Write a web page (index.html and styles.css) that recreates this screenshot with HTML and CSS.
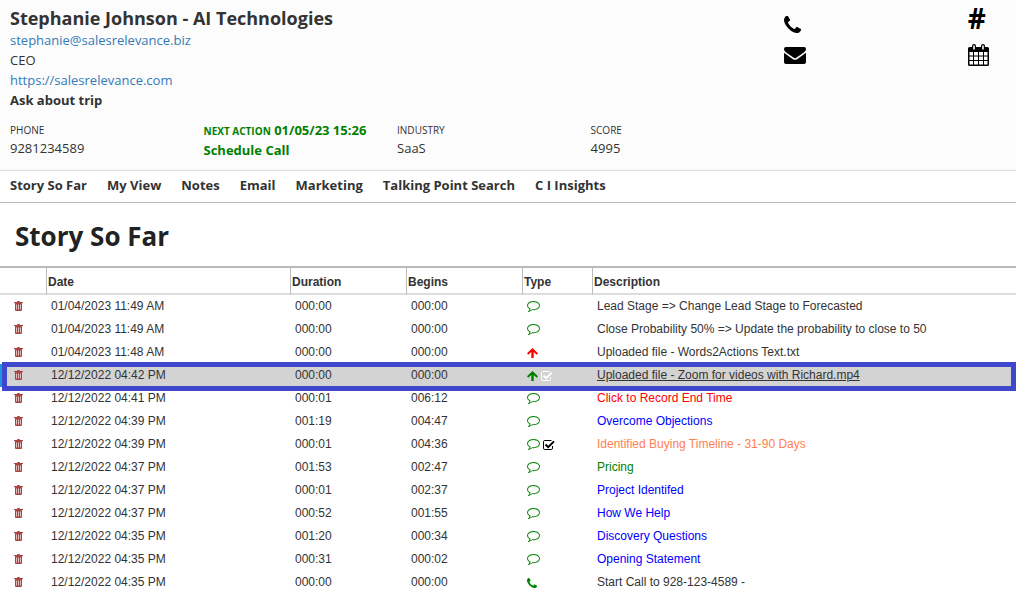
FILE: index.html
```html
<!DOCTYPE html>
<html lang="en">
<head>
    <meta charset="UTF-8">
    <meta name="viewport" content="width=device-width, initial-scale=1.0">
    <title>Stephanie Johnson - AI Technologies</title>
    <link rel="stylesheet" href="styles.css">
</head>
<body>

    <!-- Icon definitions -->
    <svg class="icon-defs" aria-hidden="true">
        <symbol id="icon-phone" viewBox="0 128 1408 1408">
            <path d="M1408 1240q0 27-10 70.5t-21 68.5q-21 50-122 106-94 51-186 51-27 0-52.5-3.5t-57.5-12.5-47.5-14.5-55.5-20.5-49-18q-98-35-175-83-128-79-264.5-215.5t-215.5-264.5q-48-77-83-175-3-9-18-49t-20.5-55.5-14.5-47.5-12.5-57.5-3.5-52.5q0-92 51-186 56-101 106-122 25-11 68.5-21t70.5-10q14 0 21 3 18 6 53 76 11 19 30 54t35 63.5 31 53.5q3 4 17.5 25t21.5 35.5 7 28.5q0 20-28.5 50t-62 55-62 53-28.5 46q0 9 5 22.5t8.5 20.5 14 24 11.5 19q76 137 174 235t235 174q2 1 19 11.5t24 14 20.5 8.5 22.5 5q18 0 46-28.5t53-62 55-62 50-28.5q14 0 28.5 7t35.5 21.5 25 17.5q25 15 53.5 31t63.5 35 54 30q70 35 76 53 3 7 3 21z"/>
        </symbol>
        <symbol id="icon-envelope" viewBox="0 0 22 17">
            <path d="M2 0h18a2 2 0 0 1 2 2c0 1.500-1 2.600-2.200 3.500L13 10.300c-.8.600-1.300.9-2 .9s-1.200-.3-2-.9L2.200 5.500C1 4.600 0 3.500 0 2a2 2 0 0 1 2-2z"/>
            <path d="M0 5.700c.4.400.8.800 1.300 1.100l6.600 4.600c1 .8 2 1.400 3.100 1.400s2.100-.6 3.100-1.400l6.600-4.600c.5-.3.900-.7 1.300-1.100V15a2 2 0 0 1-2 2H2a2 2 0 0 1-2-2z"/>
        </symbol>
        <symbol id="icon-calendar" viewBox="0 0 21 22">
            <path fill-rule="evenodd" d="M1.500 3H4V2a2 2 0 0 1 4 0v1h5V2a2 2 0 0 1 4 0v1h2.500A1.500 1.500 0 0 1 21 4.500v16a1.500 1.500 0 0 1-1.500 1.500h-18A1.500 1.500 0 0 1 0 20.500v-16A1.500 1.500 0 0 1 1.500 3zM5.200 1.500v4h1.600v-4zM14.200 1.500v4h1.600v-4zM1.500 8v3.500H5V8zM6 8v3.500h4V8zM11 8v3.500h4V8zM16 8v3.500h3.500V8zM1.500 12.500V16H5v-3.500zM6 12.500V16h4v-3.500zM11 12.500V16h4v-3.500zM16 12.500V16h3.500v-3.500zM1.500 17v3.500H5V17zM6 17v3.500h4V17zM11 17v3.500h4V17zM16 17v3.500h3.500V17z"/>
        </symbol>
        <symbol id="icon-trash" viewBox="0 0 9 10">
            <path fill-rule="evenodd" d="M3 1L3.500 0h2L6 1h3v1H8v7a1 1 0 0 1-1 1H2a1 1 0 0 1-1-1V2H0V1z"/>
            <path class="slots" d="M2.500 3.500v5M4.500 3.500v5M6.500 3.500v5"/>
        </symbol>
        <symbol id="icon-comment" viewBox="0 256 1792 1536">
            <path d="M896 384q-204 0-381.500 69.500t-282 187.500-104.500 255q0 112 71.500 213.500t201.500 175.500l87 50-27 96q-24 91-70 172 152-63 275-171l43-38 57 6q69 8 130 8 204 0 381.500-69.500t282-187.500 104.500-255-104.500-255-282-187.500-381.500-69.500zM1792 896q0 174-120 321.500t-326 233-450 85.500q-70 0-145-8-198 175-460 242-49 14-114 22h-5q-15 0-27-10.500t-16-27.500v-1q-3-4-.5-12t2-10 4.500-9.500l6-9 7-8.500 8-9q7-8 31-34.500t34.500-38 31-39.500 32.500-51 27-59 26-76q-157-89-247.500-220t-90.500-281q0-174 120-321.500t326-233 450-85.500 450 85.500 326 233 120 321.500z"/>
        </symbol>
        <symbol id="icon-arrow" viewBox="0 0 11 10">
            <path d="M5.500 0L11 5.300 9.700 6.700 6.700 3.900V10H4.300V3.900l-3 2.800L0 5.300z"/>
        </symbol>
        <symbol id="icon-check" viewBox="0 0 12 10">
            <path d="M9.500 6v2.200a1.300 1.300 0 0 1-1.300 1.300H1.800A1.300 1.300 0 0 1 .5 8.200V1.800A1.300 1.300 0 0 1 1.800.5H8.500" fill="none" stroke="currentColor"/>
            <path d="M2.500 4.500L5.200 7.200 11 1.400" fill="none" stroke="currentColor" stroke-width="2"/>
        </symbol>
    </svg>

    <header class="profile">
        <div class="contact">
            <h2>Stephanie Johnson - AI Technologies</h2>
            <div><a href="mailto:stephanie@salesrelevance.biz">stephanie@salesrelevance.biz</a></div>
            <div>CEO</div>
            <div><a href="https://salesrelevance.com">https://salesrelevance.com</a></div>
            <div class="note">Ask about trip</div>
        </div>
        <div class="actions">
            <a href="tel:9281234589" aria-label="Call"><svg class="icon-call"><use href="#icon-phone"/></svg></a>
            <a href="mailto:stephanie@salesrelevance.biz" aria-label="Send email"><svg class="icon-mail"><use href="#icon-envelope"/></svg></a>
        </div>
        <div class="actions tools">
            <a href="#" class="hash">#</a>
            <a href="#" aria-label="Calendar"><svg class="icon-date"><use href="#icon-calendar"/></svg></a>
        </div>
        <div class="field">
            <div class="field-label">PHONE</div>
            <div>9281234589</div>
        </div>
        <div class="next-action">
            <div><span class="field-label">NEXT ACTION</span> 01/05/23 15:26</div>
            <div>Schedule Call</div>
        </div>
        <div class="field">
            <div class="field-label">INDUSTRY</div>
            <div>SaaS</div>
        </div>
        <div class="field">
            <div class="field-label">SCORE</div>
            <div>4995</div>
        </div>
    </header>

    <nav class="tabs">
        <a href="#">Story So Far</a>
        <a href="#">My View</a>
        <a href="#">Notes</a>
        <a href="#">Email</a>
        <a href="#">Marketing</a>
        <a href="#">Talking Point Search</a>
        <a href="#">C I Insights</a>
    </nav>

    <h1>Story So Far</h1>

    <table id="storyTable">
        <thead>
            <tr>
                <th class="col-delete"></th>
                <th class="col-date">Date</th>
                <th class="col-time">Duration</th>
                <th class="col-time">Begins</th>
                <th class="col-type">Type</th>
                <th>Description</th>
            </tr>
        </thead>
        <tbody>
            <!-- Story rows are added by renderTable -->
        </tbody>
    </table>

    <script src="script.js"></script>
</body>
</html>
```
FILE: styles.css
```css
* {
    box-sizing: border-box;
}
body {
    margin: 0;
    background-color: white;
    color: #333;
    font-family: "Open Sans", sans-serif;
    font-size: 13px;
    line-height: 20px;
    overflow-x: hidden;
}
svg {
    display: block;
    fill: currentColor;
}
.icon-defs {
    display: none;
}
a {
    color: #337ab7;
    text-decoration: none;
}
.profile {
    display: grid;
    grid-template-columns: repeat(4, 116fr) 110fr 23fr;
    row-gap: 10px;
    padding: 6px 10px 10px;
    background-color: #fcfcfc;
    border-bottom: 1px solid #ddd;
}
.contact {
    grid-column: span 4;
}
h2 {
    margin: 0;
    font-size: 18px;
    line-height: 24px;
}
.note {
    font-weight: bold;
}
.actions {
    display: flex;
    flex-direction: column;
    gap: 14px;
    padding-top: 10px;
}
.actions a {
    color: black;
}
.tools {
    gap: 16px;
    padding-top: 2px;
}
.hash {
    font-size: 28px;
    font-weight: bold;
}
.icon-call {
    width: 17px;
    height: 17px;
}
.icon-mail {
    width: 22px;
    height: 17px;
}
.icon-date {
    width: 21px;
    height: 22px;
}
.field {
    padding-top: 1px;
    line-height: 18px;
}
.field-label {
    font-size: 10px;
}
.next-action {
    color: green;
    font-weight: bold;
}
.next-action .field-label {
    line-height: 10px;
}
.tabs {
    display: flex;
    gap: 20px;
    padding: 4px 10px 7px;
    border-bottom: 1px solid #bbb;
}
.tabs a {
    color: #333;
    font-weight: bold;
}
h1 {
    margin: 0;
    padding: 20px 15px 16px;
    color: #222;
    font-size: 26px;
    line-height: 27px;
}
table {
    width: 100%;
    table-layout: fixed;
    border-collapse: separate;
    border-spacing: 0;
    font-family: "Liberation Sans", Arial, sans-serif;
    font-size: 12px;
    line-height: 15px;
}
th {
    height: 29px;
    padding: 3px 1px 0;
    border-top: 2px solid #bbb;
    border-bottom: 2px solid #ddd;
    border-left: 1px solid #bbb;
    text-align: left;
}
th:first-child {
    border-left: none;
}
td {
    height: 23px;
    padding: 0 5px;
    white-space: nowrap;
}
.col-delete {
    width: 46px;
}
.col-date {
    width: 244px;
}
.col-time {
    width: 116px;
}
.col-type {
    width: 70px;
}
.delete {
    display: block;
    margin-left: 9px;
    padding: 0 0 2px;
    border: none;
    background: none;
    color: #a94442;
    cursor: pointer;
}
.delete svg {
    width: 9px;
    height: 10px;
}
.slots {
    stroke: #e3bcbb;
}
.type {
    display: flex;
    align-items: center;
    gap: 3px;
    color: green;
}
.icon-comment {
    width: 13px;
    height: 11px;
}
.icon-arrow {
    width: 11px;
    height: 10px;
}
.icon-phone {
    width: 10px;
    height: 10px;
}
.icon-check {
    width: 12px;
    height: 10px;
    color: black;
}
.red {
    color: red;
}
.blue {
    color: blue;
}
.green {
    color: green;
}
.coral {
    color: coral;
}
.selected {
    position: relative;
    background-color: lightgray;
}
.selected td:first-child {
    box-shadow: inset 2px 0 #2196dc;
}
.selected td:last-child {
    text-decoration: underline;
}
.selected .icon-check {
    color: white;
}
/* frame drawn over the whole selected row */
.selected td:last-child::after {
    content: "";
    position: absolute;
    top: -2px;
    right: 0;
    bottom: -4px;
    left: 2px;
    border: 5px solid #3f48cc;
    pointer-events: none;
}
```
FILE: script.js
```js
const stories = [
    { date: '01/04/2023 11:49 AM', duration: '000:00', begins: '000:00', type: 'comment', text: 'Lead Stage => Change Lead Stage to Forecasted' },
    { date: '01/04/2023 11:49 AM', duration: '000:00', begins: '000:00', type: 'comment', text: 'Close Probability 50% => Update the probability to close to 50' },
    { date: '01/04/2023 11:48 AM', duration: '000:00', begins: '000:00', type: 'arrow', typeColor: 'red', text: 'Uploaded file - Words2Actions Text.txt' },
    { date: '12/12/2022 04:42 PM', duration: '000:00', begins: '000:00', type: 'arrow', checked: true, selected: true, text: 'Uploaded file - Zoom for videos with Richard.mp4' },
    { date: '12/12/2022 04:41 PM', duration: '000:01', begins: '006:12', type: 'comment', color: 'red', text: 'Click to Record End Time' },
    { date: '12/12/2022 04:39 PM', duration: '001:19', begins: '004:47', type: 'comment', color: 'blue', text: 'Overcome Objections' },
    { date: '12/12/2022 04:39 PM', duration: '000:01', begins: '004:36', type: 'comment', checked: true, color: 'coral', text: 'Identified Buying Timeline - 31-90 Days' },
    { date: '12/12/2022 04:37 PM', duration: '001:53', begins: '002:47', type: 'comment', color: 'green', text: 'Pricing' },
    { date: '12/12/2022 04:37 PM', duration: '000:01', begins: '002:37', type: 'comment', color: 'blue', text: 'Project Identifed' },
    { date: '12/12/2022 04:37 PM', duration: '000:52', begins: '001:55', type: 'comment', color: 'blue', text: 'How We Help' },
    { date: '12/12/2022 04:35 PM', duration: '001:20', begins: '000:34', type: 'comment', color: 'blue', text: 'Discovery Questions' },
    { date: '12/12/2022 04:35 PM', duration: '000:31', begins: '000:02', type: 'comment', color: 'blue', text: 'Opening Statement' },
    { date: '12/12/2022 04:35 PM', duration: '000:00', begins: '000:00', type: 'phone', text: 'Start Call to 928-123-4589 -' }
];

function icon(name, extra) {
    return `<svg class="icon-${name} ${extra || ''}"><use href="#icon-${name}"/></svg>`;
}

function renderTable() {
    const tableBody = document.querySelector('#storyTable tbody');
    tableBody.innerHTML = '';

    stories.forEach((story, index) => {
        const row = document.createElement('tr');
        if (story.selected) {
            row.className = 'selected';
        }
        row.innerHTML = `
            <td><button class="delete" aria-label="Delete" onclick="deleteStory(${index})">${icon('trash')}</button></td>
            <td>${story.date}</td>
            <td>${story.duration}</td>
            <td>${story.begins}</td>
            <td><div class="type">${icon(story.type, story.typeColor)}${story.checked ? icon('check') : ''}</div></td>
            <td class="${story.color || ''}">${story.text}</td>
        `;
        tableBody.appendChild(row);
    });
}

function deleteStory(index) {
    stories.splice(index, 1);
    renderTable();
}

renderTable();
```
